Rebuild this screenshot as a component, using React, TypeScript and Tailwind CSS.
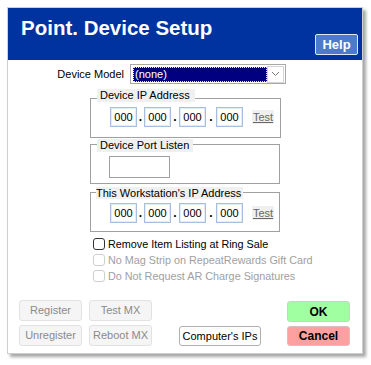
import React from "react";

const font = { fontFamily: '"Liberation Sans", Arial, sans-serif' };

function IpBox() {
  return (
    <div className="w-[27px] h-[20px] border border-[#a6bedf] shadow-[inset_0_0_0_1px_#e4ecf7] bg-white flex items-center justify-center text-[11px] text-black leading-none">
      000
    </div>
  );
}

function IpRow() {
  return (
    <div className="flex items-center">
      <IpBox />
      <div className="w-[7px] flex justify-center text-[12px] font-bold leading-none text-black">.</div>
      <IpBox />
      <div className="w-[8px] flex justify-center text-[12px] font-bold leading-none text-black">.</div>
      <IpBox />
      <div className="w-[10px] flex justify-center text-[12px] font-bold leading-none text-black">.</div>
      <IpBox />
      <span className="ml-[9px] px-[1px] h-[14px] flex items-center bg-[#f0f0f0] text-[11px] text-[#666] underline leading-none">Test</span>
    </div>
  );
}

function Check({ label, disabled }: { label: string; disabled?: boolean }) {
  return (
    <div className="h-[16px] flex items-center">
      <div
        className={
          disabled
            ? "w-[12px] h-[12px] rounded-[3px] border border-[#cfcfcf] bg-white"
            : "w-[12px] h-[12px] rounded-[3px] border border-[#333] bg-white"
        }
      />
      <span className={disabled ? "ml-[3px] text-[10.8px] text-[#a0a0a0] leading-none" : "ml-[3px] text-[10.8px] text-black leading-none"}>
        {label}
      </span>
    </div>
  );
}

function DisBtn({ label }: { label: string }) {
  return (
    <div className="w-[63px] h-[21px] rounded-[3px] border border-[#e2e2e2] bg-[#f5f5f5] flex items-center justify-center text-[11px] text-[#8a8a8a] leading-none">
      {label}
    </div>
  );
}

export default function App() {
  return (
    <div className="w-[371px] h-[365px] bg-white pl-[7px] pt-[7px]" style={font}>
      <div className="w-[356px] h-[347px] border border-[#cfcfcf] bg-white shadow-[3px_3px_3px_rgba(0,0,0,0.35)] flex flex-col">
        {/* header */}
        <div className="h-[52px] bg-[#0033a0] flex justify-between pl-[13px] pr-[4px]">
          <div className="pt-[8px] text-[20.5px] leading-[24px] font-bold text-white">Point. Device Setup</div>
          <div className="self-end mb-[5px] w-[43px] h-[21px] rounded-[2px] border border-[#dfe7f7] bg-[#4d7bcb] flex items-center justify-center text-[13px] font-bold text-white leading-none">
            Help
          </div>
        </div>

        {/* device model */}
        <div className="mt-[4px] flex items-center h-[20px]">
          <div className="w-[116px] text-right text-[11px] text-black leading-none">Device Model</div>
          <div className="ml-[6px] w-[156px] h-[20px] border border-[#a8a8a8] bg-white flex items-center p-[1px]">
            <div className="ml-[1px] w-[134px] h-[15px] bg-[#000080] border border-dotted border-[#ffff60] flex items-center pl-[1px] text-[11px] text-white leading-none">
              (none)
            </div>
            <div className="ml-auto w-[17px] h-[17px] border border-[#d4d4d4] bg-white flex items-center justify-center">
              <svg width="9" height="6" viewBox="0 0 9 6">
                <path d="M1 1 L4.5 4.5 L8 1" fill="none" stroke="#777" strokeWidth="1" />
              </svg>
            </div>
          </div>
        </div>

        {/* group 1 */}
        <div className="relative ml-[82px] mt-[14px] w-[191px] h-[40px] border border-[#a0a0a0] pl-[19px] pt-[8px]">
          <span className="absolute left-[6px] top-[-10px] h-[13px] pl-[3px] pr-[5px] bg-[#f0f0f0] text-[11px] leading-[13px] text-black">
            Device IP Address
          </span>
          <IpRow />
        </div>

        {/* group 2 */}
        <div className="relative ml-[82px] mt-[6px] w-[190px] h-[40px] border border-[#a0a0a0] pl-[18px] pt-[11px]">
          <span className="absolute left-[6px] top-[-6px] h-[13px] pl-[3px] pr-[4px] bg-[#f0f0f0] text-[11px] leading-[13px] text-black">
            Device Port Listen
          </span>
          <div className="w-[61px] h-[22px] border border-[#a0a0a0] bg-white" />
        </div>

        {/* group 3 */}
        <div className="relative ml-[82px] mt-[8px] w-[190px] h-[40px] border border-[#a0a0a0] pl-[19px] pt-[10px]">
          <span className="absolute left-[5px] top-[-6px] h-[12px] pr-[2px] bg-[#f0f0f0] text-[11px] leading-[12px] text-black">
            This Workstation's IP Address
          </span>
          <IpRow />
        </div>

        {/* checkboxes */}
        <div className="ml-[85px] mt-[4px] flex flex-col">
          <Check label="Remove Item Listing at Ring Sale" />
          <Check label="No Mag Strip on RepeatRewards Gift Card" disabled />
          <Check label="Do Not Request AR Charge Signatures" disabled />
        </div>

        {/* buttons */}
        <div className="mt-[16px] ml-[11px] flex items-end">
          <div className="grid grid-cols-[63px_63px] gap-x-[7px] gap-y-[4px]">
            <DisBtn label="Register" />
            <DisBtn label="Test MX" />
            <DisBtn label="Unregister" />
            <DisBtn label="Reboot MX" />
          </div>
          <div className="ml-[27px] w-[82px] h-[20px] rounded-[3px] border border-[#b0b0b0] bg-white flex items-center justify-center text-[11px] text-black leading-none">
            Computer's IPs
          </div>
          <div className="ml-[26px] flex flex-col gap-[4px]">
            <div className="w-[63px] h-[21px] rounded-[3px] border border-[#c0d8c0] bg-[#a0ffa0] flex items-center justify-center text-[12px] font-bold text-black leading-none">
              OK
            </div>
            <div className="w-[63px] h-[20px] rounded-[3px] border border-[#d8c0c0] bg-[#ffa0a0] flex items-center justify-center text-[12px] font-bold text-black leading-none">
              Cancel
            </div>
          </div>
        </div>
      </div>
    </div>
  );
}
